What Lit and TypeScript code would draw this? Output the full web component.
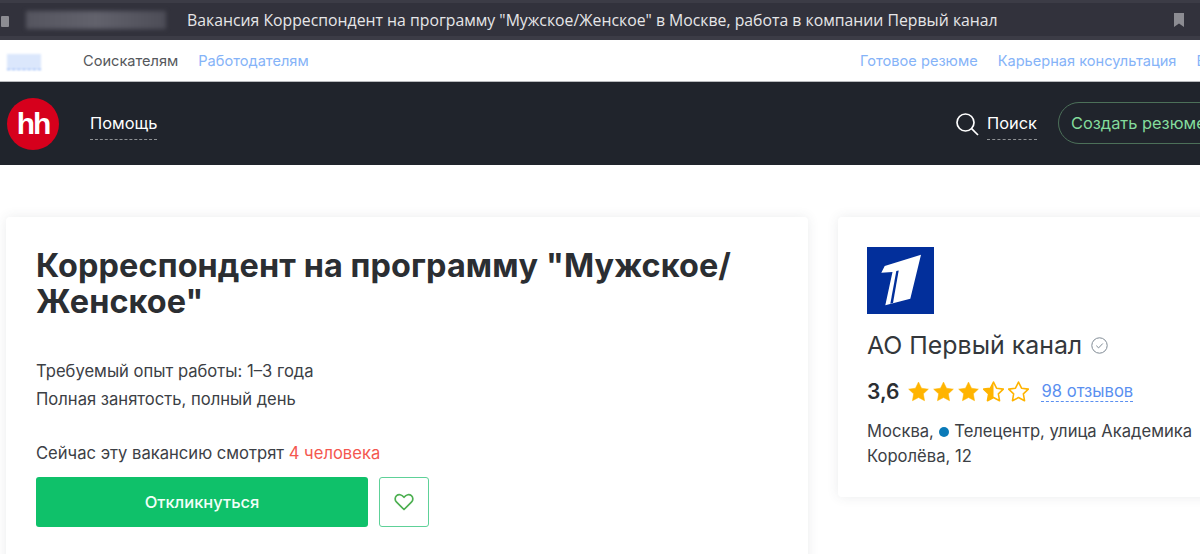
import { LitElement, html, svg, css } from "lit";
import { customElement } from "lit/decorators.js";

const STAR = "M8 .8l2.3 4.7 5.2.7-3.8 3.6.9 5.2L8 12.6l-4.6 2.4.9-5.2L.5 6.2l5.2-.7z";

@customElement("app-root")
export class AppRoot extends LitElement {
  static styles = css`
    :host {
      display: block;
      width: 1200px;
      height: 554px;
      overflow: hidden;
      background: #fff;
      font-family: Inter, "Noto Sans", sans-serif;
      color: #303438;
    }

    .chrome {
      height: 40px;
      box-sizing: border-box;
      padding: 3px 0;
      background: #3c3c46;
    }
    .address {
      height: 33px;
      display: flex;
      align-items: center;
      background: #32323c;
      padding-left: 1px;
    }
    .lock {
      width: 8px;
      height: 11px;
      margin-top: 4px;
      background: #8c8c92;
      border-radius: 1px;
      flex: none;
    }
    .url {
      width: 140px;
      height: 18px;
      margin-left: 17px;
      flex: none;
      background: linear-gradient(90deg, #55555f, #62626c 50%, #4d4d57);
      filter: blur(2px);
    }
    .title {
      margin-left: 21px;
      flex: 1;
      font: 15.8px "Open Sans", sans-serif;
      color: #e6e6e8;
      white-space: nowrap;
    }
    .bookmark {
      width: 12px;
      height: 14px;
      margin-right: 15px;
      flex: none;
    }

    .topbar {
      height: 42px;
      box-sizing: border-box;
      display: flex;
      align-items: center;
      font-size: 14.6px;
      border-bottom: 1px solid #b8babd;
      white-space: nowrap;
    }
    .region {
      width: 34px;
      height: 15px;
      margin: 2px 0 0 7px;
      flex: none;
      background: #dbe7fc;
      border-bottom: 1px dashed #7aa5f5;
      filter: blur(1px);
    }
    .seeker {
      margin-left: 42px;
      color: #55585c;
    }
    .link {
      color: #85b3f8;
    }
    .employer {
      margin-left: 20px;
    }
    .top-right {
      margin-left: auto;
      display: flex;
      gap: 20px;
      width: 340px;
    }

    .nav {
      height: 83px;
      background: #20242c;
      display: flex;
      align-items: center;
      color: #fff;
      font-size: 16.4px;
      white-space: nowrap;
    }
    .logo {
      width: 52px;
      height: 52px;
      margin-left: 7px;
      border-radius: 50%;
      background: #d6001c;
      display: flex;
      align-items: center;
      justify-content: center;
      font: bold 30px/52px "Liberation Sans", sans-serif;
      letter-spacing: -2px;
      flex: none;
    }
    .dashed {
      padding-bottom: 6px;
      border-bottom: 1px dashed #8f9295;
      margin-top: 6px;
    }
    .help {
      margin-left: 31px;
    }
    .nav-right {
      margin-left: auto;
      display: flex;
      align-items: center;
      width: 245px;
    }
    .search-icon {
      width: 24px;
      height: 24px;
      margin-right: 8px;
      flex: none;
    }
    .create {
      margin: 0 0 2px 21px;
      height: 42px;
      width: 220px;
      flex: none;
      box-sizing: border-box;
      padding-left: 12px;
      display: flex;
      align-items: center;
      border: 1px solid #4c7059;
      border-radius: 21px;
      color: #84dc9c;
    }

    .main {
      padding: 52px 0 0 6px;
      display: grid;
      grid-template-columns: 802px 420px;
      gap: 30px;
      align-items: start;
      background: #fff;
    }
    .card {
      background: #fff;
      border-radius: 4px;
      box-shadow: 0 0 12px rgba(60, 70, 80, 0.1);
    }
    .job {
      box-sizing: border-box;
      height: 360px;
      padding: 31px 30px;
    }
    h1 {
      margin: 0;
      font-size: 32.4px;
      line-height: 36px;
      font-weight: 700;
      color: #2b2e32;
      letter-spacing: 0.1px;
    }
    .meta {
      margin-top: 37px;
      font-size: 16.6px;
      line-height: 28px;
      color: #3c4045;
    }
    .watching {
      margin-top: 26px;
      font-size: 16.6px;
      line-height: 28px;
      color: #3c4045;
    }
    .watching span {
      color: #f4574f;
    }
    .actions {
      margin-top: 10px;
      display: flex;
      gap: 11px;
    }
    .apply {
      width: 332px;
      height: 50px;
      border-radius: 3px;
      background: #0fc16a;
      color: #f2fff8;
      display: flex;
      align-items: center;
      justify-content: center;
      font-size: 16.5px;
      font-weight: 500;
    }
    .fav {
      width: 50px;
      height: 50px;
      box-sizing: border-box;
      border: 1px solid #5ed198;
      border-radius: 3px;
      display: flex;
      align-items: center;
      justify-content: center;
    }

    .company {
      box-sizing: border-box;
      height: 280px;
      padding: 30px 29px;
    }
    .channel {
      display: block;
      width: 67px;
      height: 67px;
    }
    .name {
      margin-top: 13px;
      display: flex;
      align-items: center;
      gap: 9px;
      font-size: 24.9px;
      line-height: 36px;
      color: #33373b;
    }
    .rating {
      margin-top: 16px;
      display: flex;
      align-items: center;
      font-size: 16.6px;
    }
    .score {
      font-size: 21px;
      font-weight: 600;
      color: #2b2e32;
      margin-right: 9px;
    }
    .stars {
      display: flex;
      gap: 4px;
      margin-right: 12px;
    }
    .stars svg {
      width: 21px;
      height: 21px;
    }
    .reviews {
      color: #5a8ff0;
      border-bottom: 1px dashed #5a8ff0;
      line-height: 19px;
    }
    .address-line {
      margin-top: 15px;
      width: 335px;
      font-size: 16.6px;
      line-height: 25px;
      color: #3c4045;
    }
    .metro {
      display: inline-block;
      width: 10px;
      height: 10px;
      border-radius: 50%;
      background: #0a7ab8;
      margin: 0 1px 0 0;
    }
  `;

  star(kind: string) {
    return html`<svg viewBox="0 0 16 16">
      <path
        d=${STAR}
        fill=${kind === "full" ? "#ffb400" : "none"}
        stroke="#ffb400"
        stroke-width=${kind === "full" ? "0.4" : "1.2"}
        stroke-linejoin="round"
      />
      ${kind === "half"
        ? svg`<path d="M8 .8v11.8l-4.6 2.4.9-5.2L.5 6.2l5.2-.7z" fill="#ffb400" />`
        : ""}
    </svg>`;
  }

  render() {
    return html`
      <div class="chrome">
        <div class="address">
          <div class="lock"></div>
          <div class="url"></div>
          <div class="title">
            Вакансия Корреспондент на программу "Мужское/Женское" в Москве, работа в компании Первый канал
          </div>
          <svg class="bookmark" viewBox="0 0 12 14">
            <path d="M1 0h10v14L6 10.5 1 14z" fill="#8c8c92" />
          </svg>
        </div>
      </div>

      <div class="topbar">
        <div class="region"></div>
        <span class="seeker">Соискателям</span>
        <span class="link employer">Работодателям</span>
        <div class="top-right">
          <span class="link">Готовое резюме</span>
          <span class="link">Карьерная консультация</span>
          <span class="link">Все</span>
        </div>
      </div>

      <div class="nav">
        <div class="logo">hh</div>
        <span class="dashed help">Помощь</span>
        <div class="nav-right">
          <svg class="search-icon" viewBox="0 0 24 24" fill="none" stroke="#fff" stroke-width="1.7">
            <circle cx="10.5" cy="10.5" r="8.5" />
            <path d="M16.6 16.6L23 23" />
          </svg>
          <span class="dashed">Поиск</span>
          <div class="create">Создать резюме</div>
        </div>
      </div>

      <div class="main">
        <section class="card job">
          <h1>Корреспондент на программу "Мужское/ Женское"</h1>
          <div class="meta">
            <div>Требуемый опыт работы: 1–3 года</div>
            <div>Полная занятость, полный день</div>
          </div>
          <div class="watching">Сейчас эту вакансию смотрят <span>4 человека</span></div>
          <div class="actions">
            <div class="apply">Откликнуться</div>
            <div class="fav">
              <svg width="20" height="18" viewBox="0 0 20 18" fill="none" stroke="#4caf50" stroke-width="1.7" stroke-linejoin="round">
                <path d="M10 16.5L2.6 9.2C.6 7.2.8 4.3 2.6 2.7 4.6 1 7.6 1.3 10 4.3 12.4 1.3 15.4 1 17.4 2.7c1.8 1.6 2 4.5 0 6.5z" />
              </svg>
            </div>
          </div>
        </section>

        <aside class="card company">
          <svg class="channel" viewBox="0 0 67 67">
            <rect width="67" height="67" fill="#022f9b" />
            <path d="M54 7.7L43.3 51.7 18.3 58.3 25.5 25 14.3 25.7 17.7 19z" fill="#fff" />
            <path d="M29.3 24L31.7 23.4 26 56 23.3 56.7z" fill="#022f9b" />
          </svg>
          <div class="name">
            АО Первый канал
            <svg width="17" height="17" viewBox="0 0 17 17" fill="none" stroke="#7f8a94" stroke-width="1">
              <circle cx="8.5" cy="8.5" r="7.7" />
              <path d="M5.3 8.7l2.3 2.2 4.2-4.4" />
            </svg>
          </div>
          <div class="rating">
            <span class="score">3,6</span>
            <div class="stars">
              ${this.star("full")}${this.star("full")}${this.star("full")}${this.star("half")}${this.star("empty")}
            </div>
            <span class="reviews">98 отзывов</span>
          </div>
          <div class="address-line">
            Москва, <span class="metro"></span> Телецентр, улица Академика Королёва, 12
          </div>
        </aside>
      </div>
    `;
  }
}
